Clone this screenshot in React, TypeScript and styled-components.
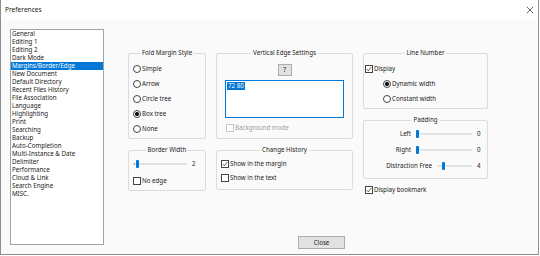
import styled, { createGlobalStyle } from "styled-components";

const GlobalStyle = createGlobalStyle`
  html, body {
    margin: 0;
    padding: 0;
    background: #ffffff;
  }
  body {
    font-family: "Noto Sans", "Segoe UI", sans-serif;
    font-size: 6.2px;
    color: #222;
  }
`;

const DIALOG_BG = "#fafafa";

const pages = [
  "General",
  "Editing 1",
  "Editing 2",
  "Dark Mode",
  "Margins/Border/Edge",
  "New Document",
  "Default Directory",
  "Recent Files History",
  "File Association",
  "Language",
  "Highlighting",
  "Print",
  "Searching",
  "Backup",
  "Auto-Completion",
  "Multi-Instance & Date",
  "Delimiter",
  "Performance",
  "Cloud & Link",
  "Search Engine",
  "MISC.",
];

const foldStyles = ["Simple", "Arrow", "Circle tree", "Box tree", "None"];

function Radio({ label, checked }: { label: string; checked?: boolean }) {
  return (
    <>
      <RadioCircle $checked={!!checked} />
      <OptionText>{label}</OptionText>
    </>
  );
}

function Check({ label, checked, disabled }: { label: string; checked?: boolean; disabled?: boolean }) {
  return (
    <>
      <CheckBox $disabled={!!disabled}>
        {checked && (
          <svg width="6" height="6" viewBox="0 0 6 6">
            <polyline points="0.6,3.1 2.3,4.8 5.4,1" fill="none" stroke="#333" strokeWidth="0.8" />
          </svg>
        )}
      </CheckBox>
      <OptionText $disabled={!!disabled}>{label}</OptionText>
    </>
  );
}

function Slider({ value, max, tick }: { value: number; max: number; tick?: boolean }) {
  return (
    <Track $tick={!!tick}>
      <Thumb style={{ left: `calc(${(value / max) * 100}% - ${(value / max) * 3}px)` }} />
    </Track>
  );
}

export default function App() {
  return (
    <>
      <GlobalStyle />
      <Window>
        <TitleBar>
          <span>Preferences</span>
          <svg width="8" height="8" viewBox="0 0 8 8">
            <path d="M0.8 0.8 L7.2 7.2 M7.2 0.8 L0.8 7.2" stroke="#444" strokeWidth="0.8" />
          </svg>
        </TitleBar>
        <Body>
          <PageList>
            {pages.map((p) => (
              <PageItem key={p} $selected={p === "Margins/Border/Edge"}>
                {p}
              </PageItem>
            ))}
          </PageList>

          <RightPane>
            <Columns>
              <Column $width={78}>
                <GroupBox $height={86}>
                  <GroupTitle>Fold Margin Style</GroupTitle>
                  <Stack $mt={4}>
                    {foldStyles.map((s) => (
                      <OptionRow key={s} $h={15}>
                        <Radio label={s} checked={s === "Box tree"} />
                      </OptionRow>
                    ))}
                  </Stack>
                </GroupBox>

                <GroupBox $height={41} $mt={11}>
                  <GroupTitle>Border Width</GroupTitle>
                  <SliderRow $h={10} $mt={5}>
                    <Slider value={2} max={30} tick />
                    <Value>2</Value>
                  </SliderRow>
                  <OptionRow $h={10} $mt={7}>
                    <Check label="No edge" />
                  </OptionRow>
                </GroupBox>
              </Column>

              <Column $width={137}>
                <GroupBox $height={86} $padX={8}>
                  <GroupTitle>Vertical Edge Settings</GroupTitle>
                  <HelpButton>?</HelpButton>
                  <EdgeInput>
                    <Selection>72 80</Selection>
                  </EdgeInput>
                  <OptionRow $h={10} $mt={5} $indent={1}>
                    <Check label="Background mode" disabled />
                  </OptionRow>
                </GroupBox>

                <GroupBox $height={40} $mt={11}>
                  <GroupTitle>Change History</GroupTitle>
                  <Stack $mt={3}>
                    <OptionRow $h={14}>
                      <Check label="Show in the margin" checked />
                    </OptionRow>
                    <OptionRow $h={14}>
                      <Check label="Show in the text" />
                    </OptionRow>
                  </Stack>
                </GroupBox>
              </Column>

              <Column $width={125}>
                <GroupBox $height={56} $padX={1}>
                  <GroupTitle>Line Number</GroupTitle>
                  <Stack $mt={4}>
                    <OptionRow $h={15}>
                      <Check label="Display" checked />
                    </OptionRow>
                    <OptionRow $h={15} $indent={18}>
                      <Radio label="Dynamic width" checked />
                    </OptionRow>
                    <OptionRow $h={15} $indent={18}>
                      <Radio label="Constant width" />
                    </OptionRow>
                  </Stack>
                </GroupBox>

                <GroupBox $height={59} $mt={11} $padX={1}>
                  <GroupTitle>Padding</GroupTitle>
                  <Stack $mt={2}>
                    <SliderRow $h={16}>
                      <SliderLabel $width={46}>Left</SliderLabel>
                      <Slider value={0} max={25} />
                      <Value>0</Value>
                    </SliderRow>
                    <SliderRow $h={16}>
                      <SliderLabel $width={46}>Right</SliderLabel>
                      <Slider value={0} max={25} />
                      <Value>0</Value>
                    </SliderRow>
                    <SliderRow $h={16}>
                      <SliderLabel $width={67}>Distraction Free</SliderLabel>
                      <Slider value={4} max={25} />
                      <Value>4</Value>
                    </SliderRow>
                  </Stack>
                </GroupBox>

                <OptionRow $h={12} $mt={5} $indent={2}>
                  <Check label="Display bookmark" checked />
                </OptionRow>
              </Column>
            </Columns>

            <CloseButton type="button">Close</CloseButton>
          </RightPane>
        </Body>
      </Window>
    </>
  );
}

const Window = styled.div`
  width: 539px;
  height: 255px;
  box-sizing: border-box;
  border: 1px solid #8e8e8e;
  border-top: none;
  background: ${DIALOG_BG};
  display: flex;
  flex-direction: column;
`;

const TitleBar = styled.div`
  height: 20px;
  flex-shrink: 0;
  background: #ffffff;
  display: flex;
  align-items: center;
  justify-content: space-between;
  padding: 0 4px 0 4px;
  font-size: 6.6px;
  line-height: 8px;
`;

const Body = styled.div`
  display: flex;
  align-items: flex-start;
  gap: 24px;
  padding: 9px 0 5px 9px;
`;

const PageList = styled.div`
  width: 94px;
  height: 216px;
  box-sizing: border-box;
  border: 1px solid #a3a3a3;
  background: #ffffff;
  display: flex;
  flex-direction: column;
`;

const PageItem = styled.div<{ $selected: boolean }>`
  height: 8px;
  line-height: 8px;
  padding-left: 1px;
  white-space: nowrap;
  background: ${(p) => (p.$selected ? "#0078d7" : "transparent")};
  color: ${(p) => (p.$selected ? "#ffffff" : "#222")};
`;

const RightPane = styled.div`
  display: flex;
  flex-direction: column;
`;

const Columns = styled.div`
  display: flex;
  align-items: flex-start;
  gap: 10px;
  margin-top: 24px;
`;

const Column = styled.div<{ $width: number }>`
  width: ${(p) => p.$width}px;
  display: flex;
  flex-direction: column;
`;

const GroupBox = styled.div<{ $height: number; $mt?: number; $padX?: number }>`
  height: ${(p) => p.$height}px;
  margin-top: ${(p) => p.$mt ?? 0}px;
  box-sizing: border-box;
  border: 1px solid #dcdcdc;
  border-radius: 2px;
  padding: 0 ${(p) => p.$padX ?? 4}px;
  display: flex;
  flex-direction: column;
`;

const GroupTitle = styled.div`
  align-self: center;
  margin-top: -5px;
  padding: 0 2px;
  height: 8px;
  line-height: 8px;
  background: ${DIALOG_BG};
  white-space: nowrap;
`;

const Stack = styled.div<{ $mt: number }>`
  display: flex;
  flex-direction: column;
  margin-top: ${(p) => p.$mt}px;
`;

const OptionRow = styled.div<{ $h: number; $mt?: number; $indent?: number }>`
  height: ${(p) => p.$h}px;
  margin-top: ${(p) => p.$mt ?? 0}px;
  padding-left: ${(p) => p.$indent ?? 0}px;
  display: flex;
  align-items: center;
  gap: 1px;
  white-space: nowrap;
`;

const OptionText = styled.span<{ $disabled?: boolean }>`
  line-height: 8px;
  color: ${(p) => (p.$disabled ? "#a0a0a0" : "#222")};
`;

const RadioCircle = styled.span<{ $checked: boolean }>`
  width: 8px;
  height: 8px;
  box-sizing: border-box;
  border: 1px solid #444;
  border-radius: 50%;
  flex-shrink: 0;
  background: ${(p) =>
    p.$checked ? "radial-gradient(circle, #111 0 1.8px, #fff 2.3px)" : "#fff"};
`;

const CheckBox = styled.span<{ $disabled: boolean }>`
  width: 8px;
  height: 8px;
  box-sizing: border-box;
  border: 1px solid ${(p) => (p.$disabled ? "#c8c8c8" : "#444")};
  background: #fff;
  flex-shrink: 0;
  display: flex;
  align-items: center;
  justify-content: center;
`;

const SliderRow = styled.div<{ $h: number; $mt?: number }>`
  height: ${(p) => p.$h}px;
  margin-top: ${(p) => p.$mt ?? 0}px;
  display: flex;
  align-items: center;
  gap: 5px;
  padding-right: 5px;
`;

const SliderLabel = styled.span<{ $width: number }>`
  width: ${(p) => p.$width}px;
  text-align: right;
  white-space: nowrap;
  line-height: 8px;
`;

const Track = styled.div<{ $tick: boolean }>`
  position: relative;
  flex: 1;
  height: 8px;
  &::before {
    content: "";
    position: absolute;
    left: 0;
    right: 0;
    top: 3px;
    height: 2px;
    background: #e3e3e3;
  }
  &::after {
    content: "";
    display: ${(p) => (p.$tick ? "block" : "none")};
    position: absolute;
    left: 1px;
    top: 3px;
    width: 1px;
    height: 2px;
    background: #9ab;
  }
`;

const Thumb = styled.span`
  position: absolute;
  top: 0;
  width: 3px;
  height: 8px;
  border-radius: 1px;
  background: #0078d7;
`;

const Value = styled.span`
  width: 4px;
  line-height: 8px;
`;

const HelpButton = styled.div`
  align-self: center;
  margin-top: 7px;
  width: 14px;
  height: 12px;
  box-sizing: border-box;
  border: 1px solid #adadad;
  background: #e1e1e1;
  display: flex;
  align-items: center;
  justify-content: center;
  line-height: 8px;
`;

const EdgeInput = styled.div`
  margin-top: 4px;
  height: 38px;
  box-sizing: border-box;
  border: 1px solid #0078d7;
  background: #fff;
  padding: 1px 0 0 1px;
  display: flex;
  align-items: flex-start;
`;

const Selection = styled.span`
  background: #0078d7;
  color: #fff;
  line-height: 8px;
  padding: 0 1px;
`;

const CloseButton = styled.button`
  margin-top: 40px;
  margin-left: 170px;
  width: 47px;
  height: 13px;
  box-sizing: border-box;
  border: 1px solid #adadad;
  background: #e1e1e1;
  padding: 0;
  font-family: inherit;
  font-size: 6.2px;
  line-height: 8px;
  color: #222;
`;
